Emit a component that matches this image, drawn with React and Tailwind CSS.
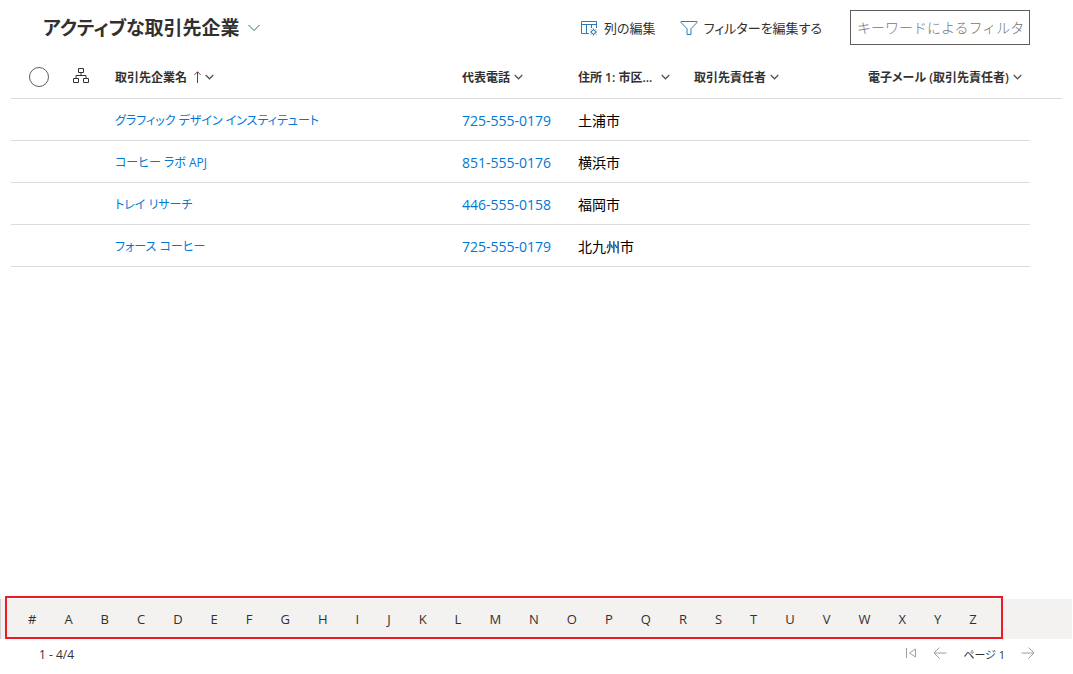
import React from "react";

const letters = ["#", ..."ABCDEFGHIJKLMNOPQRSTUVWXYZ"];

const accounts = [
  { name: "グラフィック デザイン インスティテュート", phone: "725-555-0179", city: "土浦市" },
  { name: "コーヒー ラボ APJ", phone: "851-555-0176", city: "横浜市" },
  { name: "トレイ リサーチ", phone: "446-555-0158", city: "福岡市" },
  { name: "フォース コーヒー", phone: "725-555-0179", city: "北九州市" },
];

function Chevron() {
  return (
    <svg className="mb-[2px] h-2 w-[9px] shrink-0" viewBox="0 0 9 8" fill="none" stroke="#555" strokeWidth="1.3" aria-hidden="true">
      <path d="M0.7 2 4.500 5.800 8.300 2" />
    </svg>
  );
}

function ColumnIcon() {
  return (
    <svg className="h-4 w-[18px] shrink-0" viewBox="0 0 18 16" fill="none" stroke="#2b7cb8" aria-hidden="true">
      <path d="M9 13.500H1.500V1.500H16.500V8M1.500 4.500H16.500M6.500 4.500V13.500M11.500 4.500V8" />
      <circle cx="13.500" cy="12" r="2" />
      <path d="M13.500 8.500v1.500M13.500 14v1.500M10 12h1.500M15.500 12H17M11 9.500l1 1M15 13.500l1 1M16 9.500l-1 1M12 13.500l-1 1" />
    </svg>
  );
}

function FilterIcon() {
  return (
    <svg className="h-4 w-[18px] shrink-0" viewBox="0 0 18 16" fill="none" stroke="#2b7cb8" aria-hidden="true">
      <path d="M1 1.500H17V2.500L11 8.700V14.500H7V8.700L1 2.500Z" />
    </svg>
  );
}

function HierarchyIcon() {
  return (
    <svg className="h-4 w-4" viewBox="0 0 16 16" fill="none" stroke="#333" aria-hidden="true">
      <path d="M5.500 0.500h5v4h-5zM0.500 10.500h5v4h-5zM10.500 10.500h5v4h-5zM8 4.500V7.500M3 10.500V7.500H13V10.500" />
    </svg>
  );
}

function HeadCell({ label, sorted, spread }) {
  return (
    <th scope="col" className="border-b border-[#dcdcdc] px-3 pt-px text-left font-semibold" aria-sort={sorted ? "ascending" : undefined}>
      <button
        type="button"
        className={
          spread
            ? "flex w-full items-center justify-between whitespace-nowrap"
            : "flex items-center gap-1 whitespace-nowrap"
        }
      >
        <span>{label}</span>
        {sorted && (
          <svg className="mb-[2px] ml-[2px] h-3 w-2 shrink-0" viewBox="0 0 8 12" fill="none" stroke="#6b3a3a" aria-hidden="true">
            <path d="M4.500 12V0.800M1.500 3.800 4.500 0.800 7.500 3.800" />
          </svg>
        )}
        <Chevron />
      </button>
    </th>
  );
}

function Cell({ children }) {
  return <td className="px-3 pt-[2px]">{children}</td>;
}

export default function App() {
  return (
    <div className="flex min-h-screen flex-col bg-white font-['Open_Sans','Noto_Sans_CJK_JP',sans-serif] text-[#323130]">
      <header className="flex h-14 items-center px-[43px] pb-px">
        <h1 className="text-[19px] leading-7 font-semibold [font-feature-settings:'palt']">
          <button type="button" className="flex items-center gap-2 whitespace-nowrap">
            アクティブな取引先企業
            <svg className="h-3 w-3" viewBox="0 0 12 12" fill="none" stroke="#2f6577" aria-hidden="true">
              <path d="M0.500 3 6 8.500 11.500 3" />
            </svg>
          </button>
        </h1>
        <div className="ml-auto flex items-center gap-6 text-[13px] leading-5 whitespace-nowrap [font-feature-settings:'palt']">
          <button type="button" className="flex items-center gap-[6px]">
            <ColumnIcon />
            列の編集
          </button>
          <button type="button" className="flex items-center gap-[6px]">
            <FilterIcon />
            フィルターを編集する
          </button>
        </div>
        <input
          type="text"
          aria-label="キーワードによるフィルター"
          placeholder="キーワードによるフィルター"
          className="ml-7 h-[35px] w-[180px] shrink-0 border border-[#605e5c] px-[6px] text-[14px] font-light placeholder:text-[#767472]"
        />
      </header>

      <main className="grow px-[11px]">
        <table className="w-full table-fixed border-separate border-spacing-0 [font-feature-settings:'palt']">
          <colgroup>
            <col className="w-[50px]" />
            <col className="w-[42px]" />
            <col />
            <col className="w-[116px]" />
            <col className="w-[116px]" />
            <col className="w-[174px]" />
            <col className="w-[174px]" />
            <col className="w-[32px]" />
          </colgroup>
          <thead>
            <tr className="h-[43px] text-[12px] leading-4">
              <th scope="col" className="border-b border-[#dcdcdc] pl-[18px] text-left">
                <input
                  type="checkbox"
                  aria-label="すべての行を選択"
                  className="block h-5 w-5 appearance-none rounded-full border border-[#605e5c]"
                />
              </th>
              <th scope="col" className="border-b border-[#dcdcdc] pb-[2px] pl-3 text-left">
                <button type="button" aria-label="階層" className="block">
                  <HierarchyIcon />
                </button>
              </th>
              <HeadCell label="取引先企業名" sorted />
              <HeadCell label="代表電話" />
              <HeadCell label="住所 1: 市区..." spread />
              <HeadCell label="取引先責任者" />
              <HeadCell label="電子メール (取引先責任者)" />
              <td className="border-b border-[#dcdcdc]"></td>
            </tr>
          </thead>
          <tbody className="text-[14px] leading-5 text-black [&_td]:border-[#dcdcdc] [&_td:not(:last-child)]:border-b">
            {accounts.map((a) => (
              <tr key={a.name} className="h-[42px]">
                <Cell />
                <Cell />
                <Cell>
                  <a href="#account" className="block text-[12px] leading-5 whitespace-nowrap text-[#0078d4]">{a.name}</a>
                </Cell>
                <Cell>
                  <a href="#phone" className="block whitespace-nowrap text-[#0078d4]">{a.phone}</a>
                </Cell>
                <Cell>{a.city}</Cell>
                <Cell />
                <Cell />
                <td></td>
              </tr>
            ))}
          </tbody>
        </table>
      </main>

      <nav aria-label="頭文字" className="relative mr-px flex h-10 items-center border-l border-[#d2d0ce] bg-[#f3f2f1] pr-[95px] pl-[27px]">
        <ul className="flex grow items-center justify-between text-[13px] leading-5">
          {letters.map((l) => (
            <li key={l}>
              <button type="button">{l}</button>
            </li>
          ))}
        </ul>
        <div className="pointer-events-none absolute -top-[3px] right-[69px] bottom-0 left-1 border-2 border-[#ed1c24]"></div>
      </nav>

      <footer className="flex h-[35px] items-center justify-between pr-[38px] pb-1 pl-[39px] text-[12px] leading-4">
        <span>1 - 4/4</span>
        <div className="flex items-center text-[#a19f9d]">
          <button type="button" aria-label="最初のページ" className="mr-4 pb-1">
            <svg className="h-3 w-3" viewBox="0 0 12 12" fill="none" stroke="currentColor" aria-hidden="true">
              <path d="M1.500 1V11M10.500 2V10L4.500 6Z" />
            </svg>
          </button>
          <button type="button" aria-label="前のページ" className="mr-4 pb-1">
            <svg className="h-3 w-[14px]" viewBox="0 0 14 12" fill="none" stroke="currentColor" aria-hidden="true">
              <path d="M13.500 6H1M6.500 0.500 1 6 6.500 11.500" />
            </svg>
          </button>
          <span className="mr-4 text-[11px] text-[#323130] [font-feature-settings:'palt']">ページ 1</span>
          <button type="button" aria-label="次のページ" className="pb-1">
            <svg className="h-3 w-[14px]" viewBox="0 0 14 12" fill="none" stroke="currentColor" aria-hidden="true">
              <path d="M0.500 6H13M7.500 0.500 13 6 7.500 11.500" />
            </svg>
          </button>
        </div>
      </footer>
    </div>
  );
}
